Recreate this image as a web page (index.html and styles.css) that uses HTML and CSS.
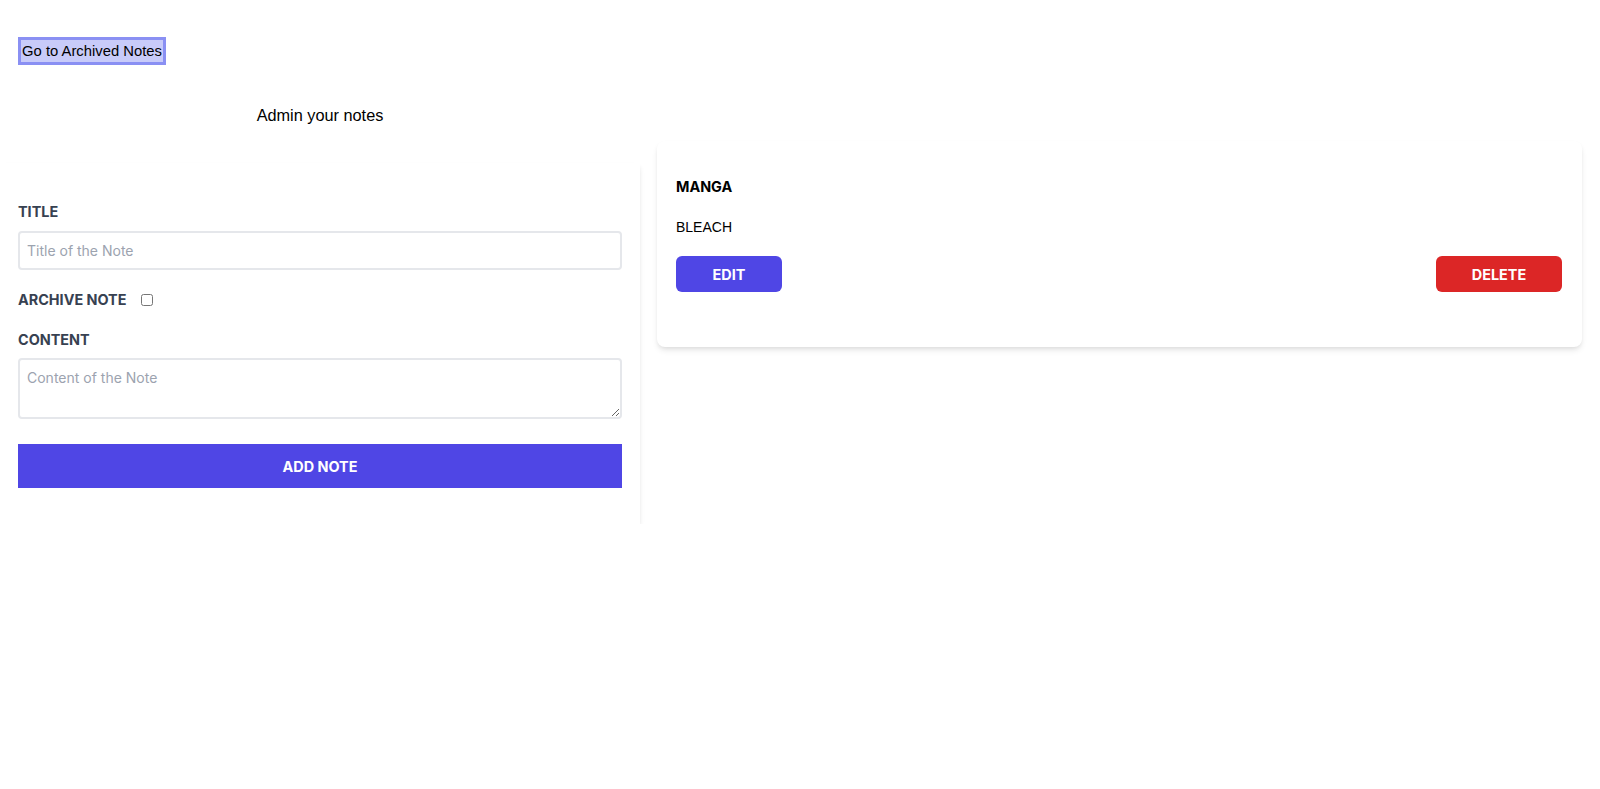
FILE: index.html
```html
<!DOCTYPE html>
<html lang="en">
<head>
<meta charset="utf-8">
<title>Notes</title>
<link rel="stylesheet" href="styles.css">
</head>
<body>
  <div class="top">
    <button class="archived-btn">Go to Archived Notes</button>
  </div>
  <div class="layout">
    <section class="left">
      <h1 class="heading">Admin your notes</h1>
      <form class="form-card">
        <label class="label" for="title">TITLE</label>
        <input class="input" id="title" type="text" placeholder="Title of the Note">
        <div class="archive-row">
          <label class="label" for="archive">ARCHIVE NOTE</label>
          <input class="checkbox" id="archive" type="checkbox">
        </div>
        <label class="label" for="content">CONTENT</label>
        <textarea class="textarea" id="content" placeholder="Content of the Note"></textarea>
        <button type="button" class="add-btn">ADD NOTE</button>
      </form>
    </section>
    <section class="right">
      <article class="note-card">
        <h2 class="note-title">MANGA</h2>
        <p class="note-body">BLEACH</p>
        <div class="note-actions">
          <button class="btn btn-edit">EDIT</button>
          <button class="btn btn-delete">DELETE</button>
        </div>
      </article>
    </section>
  </div>
</body>
</html>
```
FILE: styles.css
```css
* { box-sizing: border-box; }
html, body { margin: 0; padding: 0; background: #fff; }
body {
  font-family: "Liberation Sans", Arial, sans-serif;
  color: #000;
}
.top {
  padding: 37px 0 0 18px;
  height: 96px;
}
.archived-btn {
  display: block;
  font-family: "Liberation Sans", Arial, sans-serif;
  font-size: 14.8px;
  height: 28px;
  width: 148px;
  padding: 0;
  background: #c8cbf9;
  border: 3px solid #8a90f3;
  color: #000;
  line-height: 22px;
  text-align: center;
  cursor: pointer;
}
.layout {
  display: flex;
  align-items: flex-start;
  gap: 17px;
  padding-right: 18px;
}
.left { width: 640px; flex: none; }
.right { flex: 1; padding-top: 45px; }
.heading {
  margin: 7px 0 0;
  font-size: 16.3px;
  font-weight: 400;
  line-height: 24px;
  text-align: center;
}
.form-card {
  margin-top: 36px;
  padding: 39px 18px 36px;
  background: #fff;
  box-shadow: 0 4px 6px -1px rgba(0,0,0,0.1), 0 2px 4px -1px rgba(0,0,0,0.06);
  display: flex;
  flex-direction: column;
}
.label {
  font-family: Inter, "Noto Sans", sans-serif;
  font-size: 14.4px;
  font-weight: 700;
  color: #374151;
  line-height: 20px;
}
.input {
  margin-top: 9px;
  height: 39px;
  width: 100%;
  border: 2px solid #e5e7eb;
  border-radius: 4px;
  padding: 0 7px;
  font-family: Inter, "Noto Sans", sans-serif;
  font-size: 14px;
  color: #111827;
  outline: none;
}
.input::placeholder, .textarea::placeholder { color: #9ca3af; }
.archive-row {
  display: flex;
  align-items: center;
  margin: 20px 0 20px;
}
.checkbox {
  margin: 0 0 0 15px;
  width: 12px;
  height: 12px;
}
.textarea {
  margin-top: 8px;
  height: 61px;
  width: 100%;
  border: 2px solid #e5e7eb;
  border-radius: 4px;
  padding: 9px 7px;
  font-family: Inter, "Noto Sans", sans-serif;
  font-size: 14px;
  resize: vertical;
  outline: none;
  display: block;
}
.add-btn {
  margin-top: 25px;
  height: 44px;
  width: 100%;
  border: none;
  background: #4f46e5;
  color: #fff;
  font-family: Inter, "Noto Sans", sans-serif;
  font-size: 14.4px;
  font-weight: 700;
  cursor: pointer;
}
.note-card {
  background: #fff;
  border-radius: 8px;
  box-shadow: 0 4px 6px -1px rgba(0,0,0,0.1), 0 2px 4px -1px rgba(0,0,0,0.06);
  padding: 36px 20px 55px 19px;
  height: 206px;
}
.note-title {
  margin: 0;
  font-family: Inter, "Noto Sans", sans-serif;
  font-size: 14.4px;
  font-weight: 700;
  line-height: 20px;
}
.note-body {
  margin: 20px 0 0;
  font-size: 14px;
  line-height: 20px;
}
.note-actions {
  display: flex;
  justify-content: space-between;
  margin-top: 19px;
}
.btn {
  height: 36px;
  border: none;
  border-radius: 6px;
  color: #fff;
  font-family: Inter, "Noto Sans", sans-serif;
  font-size: 14.4px;
  font-weight: 700;
  cursor: pointer;
}
.btn-edit { width: 106px; background: #4f46e5; }
.btn-delete { width: 126px; background: #dc2626; }
```
